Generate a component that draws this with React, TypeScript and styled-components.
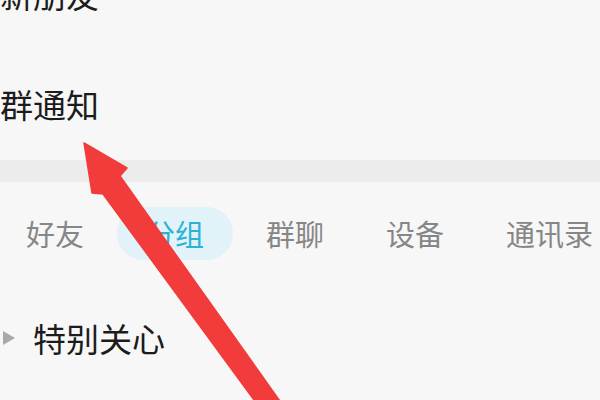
import React from "react";
import styled, { createGlobalStyle } from "styled-components";

const Global = createGlobalStyle`
  html, body { margin: 0; padding: 0; background: #f7f7f7; }
  body { font-family: "Noto Sans CJK SC", "Noto Sans", sans-serif; }
`;

const Page = styled.div`
  position: relative;
  width: 600px;
  height: 400px;
  overflow: hidden;
  background: #f7f7f7;
`;

const List = styled.div`
  display: flex;
  flex-direction: column;
  margin-top: -60px;
`;

const Item = styled.div<{ $h: number }>`
  height: ${(p) => p.$h}px;
  display: flex;
  align-items: center;
  padding-left: 0;
  font-size: 33px;
  line-height: 1;
  color: #1c1c1c;
`;

const Band = styled.div`
  height: 22px;
  background: #ececec;
`;

const TabBar = styled.div`
  display: flex;
  gap: 4px;
  padding: 25px 0;
  margin-left: -3px;
  white-space: nowrap;
`;

const Tab = styled.div<{ $active?: boolean }>`
  flex: none;
  height: 53px;
  line-height: 53px;
  padding: 0 29px;
  border-radius: 27px;
  font-size: 29px;
  color: ${(p) => (p.$active ? "#2ab3d6" : "#868686")};
  background: ${(p) => (p.$active ? "#e1f2f8" : "transparent")};
`;

const GroupRow = styled.div`
  height: 106px;
  display: flex;
  align-items: center;
  gap: 18px;
  padding-left: 3px;
`;

const Caret = styled.span`
  width: 0;
  height: 0;
  border-top: 7px solid transparent;
  border-bottom: 7px solid transparent;
  border-left: 12px solid #a9a9a9;
`;

const GroupName = styled.span`
  font-size: 33px;
  line-height: 1;
  color: #1c1c1c;
`;

const Annotation = styled.svg`
  position: absolute;
  left: 0;
  top: 0;
  pointer-events: none;
`;

export default function App() {
  const tabs = ["好友", "分组", "群聊", "设备", "通讯录"];
  return (
    <>
      <Global />
      <Page>
        <List>
          <Item $h={108}>新朋友</Item>
          <Item $h={112}>群通知</Item>
        </List>
        <Band />
        <TabBar>
          {tabs.map((t) => (
            <Tab key={t} $active={t === "分组"}>
              {t}
            </Tab>
          ))}
        </TabBar>
        <GroupRow>
          <Caret />
          <GroupName>特别关心</GroupName>
        </GroupRow>
        <Annotation width="600" height="400" viewBox="0 0 600 400">
          <polygon
            points="84,143 127,168 120,176 282,404 257,404 103,194 92,193"
            fill="#f23b3b"
            stroke="#f23b3b"
            strokeWidth="1.5"
            strokeLinejoin="round"
          />
        </Annotation>
      </Page>
    </>
  );
}
